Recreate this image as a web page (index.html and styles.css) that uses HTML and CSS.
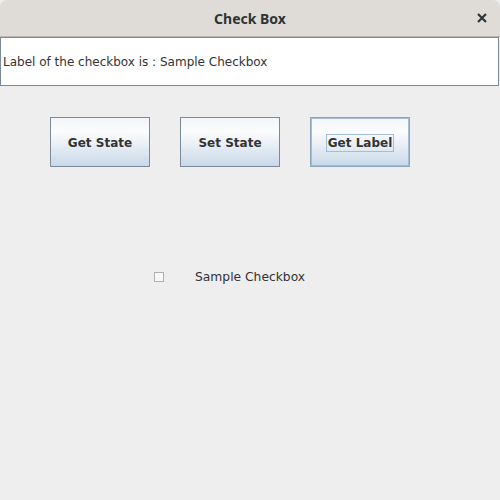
FILE: index.html
```html
<!DOCTYPE html>
<html lang="en">
<head>
  <meta charset="UTF-8">
  <title>Check Box</title>
  <link rel="stylesheet" href="styles.css">
</head>
<body>
  <div class="win">
    <div class="titlebar">
      <span class="title">Check Box</span>
      <svg class="close" width="10" height="10" viewBox="0 0 10 10">
        <path d="M1 1L9 9M9 1L1 9" stroke="#2e3436" stroke-width="2.2"/>
      </svg>
    </div>
    <div class="field">Label of the checkbox is : Sample Checkbox</div>
    <div class="btns">
      <button class="btn">Get State</button>
      <button class="btn">Set State</button>
      <button class="btn focus"><span>Get Label</span></button>
    </div>
    <label class="chk">
      <span class="box"></span>
      <span class="txt">Sample Checkbox</span>
    </label>
  </div>
</body>
</html>
```
FILE: styles.css
```css
*{
  margin: 0;
  padding: 0;
  box-sizing: border-box;
}
body{
  width: 500px;
  height: 500px;
  background: #eeeeee;
  font-family: "DejaVu Sans", sans-serif;
  overflow: hidden;
}
.win{
  width: 500px;
  height: 500px;
  background: #eeeeee;
}
.titlebar{
  height: 37px;
  background: #dfdcd8;
  border-radius: 7px 7px 0 0;
  border-bottom: 1px solid #bab5ab;
  display: flex;
  align-items: center;
  justify-content: center;
  position: relative;
}
.title{
  font-family: "Noto Sans", "DejaVu Sans", sans-serif;
  font-weight: bold;
  font-size: 14px;
  color: #2e3436;
}
.close{
  position: absolute;
  right: 13px;
  top: 13px;
}
.field{
  height: 49px;
  width: 499px;
  background: #fff;
  border: 1px solid #7a8a99;
  padding-left: 2px;
  display: flex;
  align-items: center;
  font-size: 12px;
  color: #333;
}
.btns{
  display: flex;
  gap: 30px;
  padding: 31px 0 0 50px;
}
.btn{
  width: 100px;
  height: 50px;
  padding-top: 1px;
  border: 1px solid #7a8a99;
  background: linear-gradient(#f2f5f9, #fbfcfd 30%, #c8d8e8);
  font-family: "DejaVu Sans", sans-serif;
  font-weight: bold;
  font-size: 12px;
  color: #333;
}
.btn.focus{
  box-shadow: 0 0 0 1px #a3bdd6 inset;
  border-color: #8ea6bd;
}
.btn.focus span{
  border: 1px solid #a3bdd6;
  padding: 1px 1px;
}
.chk{
  display: flex;
  align-items: center;
  padding: 103px 0 0 154px;
}
.box{
  width: 10px;
  height: 10px;
  border: 1px solid #b0b0b0;
  background: #f8f8f8;
}
.txt{
  margin-left: 31px;
  font-size: 12.3px;
  color: #333;
}
```
